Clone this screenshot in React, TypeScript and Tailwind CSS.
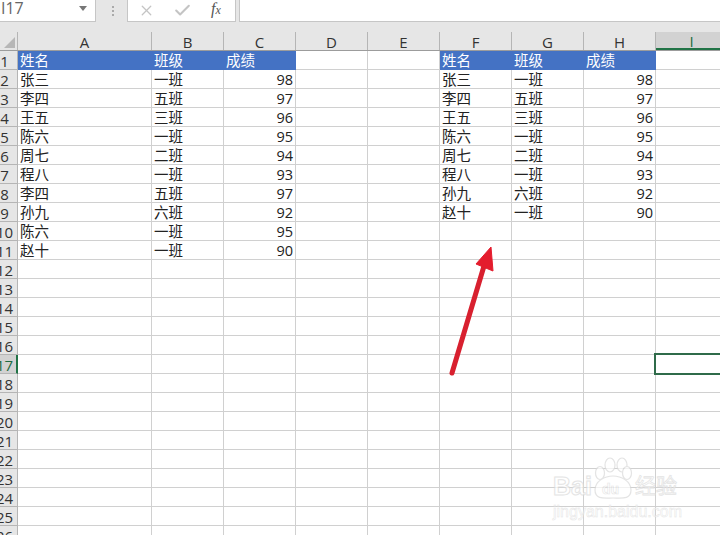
import { X, Check } from "lucide-react";

const font = "font-['Liberation_Sans','Noto_Sans_CJK_SC',sans-serif]";
const thin = "font-['Open_Sans','Liberation_Sans',sans-serif] font-normal";

const columns = [
  { label: "A", width: "w-[134px]" },
  { label: "B", width: "w-[72px]" },
  { label: "C", width: "w-[72px]" },
  { label: "D", width: "w-[72px]" },
  { label: "E", width: "w-[72px]" },
  { label: "F", width: "w-[72px]" },
  { label: "G", width: "w-[72px]" },
  { label: "H", width: "w-[72px]" },
  { label: "I", width: "w-[72px]" },
];

const left = [
  ["张三", "一班", "98"],
  ["李四", "五班", "97"],
  ["王五", "三班", "96"],
  ["陈六", "一班", "95"],
  ["周七", "二班", "94"],
  ["程八", "一班", "93"],
  ["李四", "五班", "97"],
  ["孙九", "六班", "92"],
  ["陈六", "一班", "95"],
  ["赵十", "一班", "90"],
];

const right = [
  ["张三", "一班", "98"],
  ["李四", "五班", "97"],
  ["王五", "三班", "96"],
  ["陈六", "一班", "95"],
  ["周七", "二班", "94"],
  ["程八", "一班", "93"],
  ["孙九", "六班", "92"],
  ["赵十", "一班", "90"],
];

const rows = Array.from({ length: 26 }, (_, i) => i + 1);

function cellText(rowNo: number, colIdx: number) {
  const head = ["姓名", "班级", "成绩"];
  if (colIdx <= 2) {
    if (rowNo === 1) return head[colIdx];
    return left[rowNo - 2]?.[colIdx] ?? "";
  }
  if (colIdx >= 5 && colIdx <= 7) {
    if (rowNo === 1) return head[colIdx - 5];
    return right[rowNo - 2]?.[colIdx - 5] ?? "";
  }
  return "";
}

function Toolbar() {
  return (
    <div className="h-[32px] bg-[#e6e6e6] flex items-start">
      {/* 이름 상자 */}
      <div className="w-[96px] h-[22px] bg-white border-r border-b border-[#c6c6c6] flex items-start justify-between pr-[5px]">
        <span className={`text-[16px] leading-[16px] pl-[1px] text-[#666] ${thin}`}>I17</span>
        <span className="w-0 h-0 border-x-[4px] border-x-transparent border-t-[5px] border-t-[#777] mr-[3px] mt-[6px]" />
      </div>
      <div className="w-[31px] h-[22px] flex flex-col items-center justify-center gap-[2px] pl-[2px]">
        <span className="w-[2px] h-[2px] bg-[#aaa]" />
        <span className="w-[2px] h-[2px] bg-[#aaa]" />
        <span className="w-[2px] h-[2px] bg-[#aaa]" />
      </div>
      {/* 수식 버튼 */}
      <div className="w-[109px] h-[22px] bg-white border-x border-b border-[#c6c6c6] flex items-center pl-[10px] gap-[18px]">
        <X size={17} strokeWidth={1.8} className="text-[#c4c4c4]" />
        <Check size={19} strokeWidth={2.6} className="text-[#c4c4c4]" />
        <span className="font-['Liberation_Serif',serif] italic text-[16px] leading-none text-[#555] ml-[1px] pb-[3px]">
          f<span className="text-[12px]">x</span>
        </span>
      </div>
      <div className="w-[3px]" />
      <div className="flex-1 h-[22px] bg-white border-l border-b border-[#c6c6c6]" />
    </div>
  );
}

function ColumnHeader() {
  return (
    <div className="flex h-[19px] bg-[#e6e6e6] border-b border-[#9c9c9c]">
      <div className="w-[18px] shrink-0 border-r border-[#b5b5b5] flex items-end justify-end pr-[2px] pb-[2px]">
        <span className="w-0 h-0 border-l-[11px] border-l-transparent border-b-[11px] border-b-[#b7b7b7]" />
      </div>
      {columns.map((c) => (
        <div
          key={c.label}
          className={`${c.width} shrink-0 border-r border-[#b5b5b5] flex items-center justify-center text-[15px] leading-none pt-[2px] ${thin} ${
            c.label === "I" ? "bg-[#d2d2d2] border-b-2 border-b-[#217346] text-[#1f6b41]" : "text-[#333]"
          }`}
        >
          {c.label}
        </div>
      ))}
    </div>
  );
}

function Row({ n }: { n: number }) {
  const isActive = n === 17;
  return (
    <div className="flex h-[19px]">
      <div
        className={`w-[18px] shrink-0 border-r border-b flex text-[15px] leading-none ${thin} ${
          isActive
            ? "bg-[#d2d2d2] border-r-2 border-r-[#217346] border-b-[#b5b5b5] text-[#1f6b41]"
            : "bg-[#e6e6e6] border-[#b5b5b5] text-[#333]"
        }`}
      >
        <div className="w-[9px] flex justify-center items-center pt-[2px]">
          <span>{n}</span>
        </div>
      </div>
      {columns.map((c, i) => {
        const text = cellText(n, i);
        const filled = n === 1 && i <= 7 && i !== 3 && i !== 4;
        const numeric = n > 1 && (i === 2 || i === 7);
        return (
          <div
            key={c.label}
            className={`${c.width} shrink-0 border-b border-r flex items-center pt-[2px] leading-none whitespace-nowrap ${
              filled ? "bg-[#4472c4] text-white border-[#4472c4]" : "border-[#d0d0d0] text-[#222]"
            } ${numeric ? `justify-end pr-[2px] text-[14.5px] ${thin}` : "pl-[2px] text-[14.5px]"}`}
          >
            {text}
          </div>
        );
      })}
    </div>
  );
}

export default function App() {
  return (
    <div className={`relative w-[720px] h-[535px] overflow-hidden bg-white ${font}`}>
      <Toolbar />
      <ColumnHeader />
      {rows.map((n) => (
        <Row key={n} n={n} />
      ))}

      {/* 선택 셀 */}
      <div className="absolute left-[654px] top-[353px] w-[80px] h-[22px] border-2 border-[#2f6b4a]" />

      {/* 화살표 */}
      <svg className="absolute left-[440px] top-[240px]" width="60" height="140" viewBox="0 0 60 140">
        <path d="M12 133 L44 26" stroke="#d8202f" strokeWidth="5" strokeLinecap="round" fill="none" />
        <path d="M51 7 L36 24 L53 31 Z" fill="#e41c2d" stroke="#e41c2d" strokeWidth="1" strokeLinejoin="round" />
      </svg>

      {/* 워터마크 */}
      <div className="absolute left-[552px] top-[456px] w-[150px] h-[70px] opacity-70">
        <svg className="absolute left-[38px] top-0" width="50" height="46" viewBox="0 0 50 46" fill="#fff" stroke="#d9d9d9" strokeWidth="1.2">
          <ellipse cx="10" cy="17" rx="4.5" ry="6.5" />
          <ellipse cx="20" cy="9" rx="5" ry="7" />
          <ellipse cx="32" cy="9" rx="5" ry="7" />
          <ellipse cx="37" cy="17" rx="4.5" ry="6.5" />
          <path d="M5 34 C5 25 15 20 23 20 C31 20 41 25 41 34 C41 44 31 42 23 42 C15 42 5 44 5 34 Z" />
        </svg>
        <span className="absolute left-[1px] top-[18px] text-[25px] leading-none font-bold text-white [-webkit-text-stroke:1px_#d9d9d9]">Bai</span>
        <span className="absolute left-[50px] top-[26px] text-[14px] leading-none font-bold text-white [-webkit-text-stroke:0.6px_#d9d9d9]">du</span>
        <span className="absolute left-[83px] top-[19px] text-[21px] leading-none text-white [-webkit-text-stroke:0.8px_#d9d9d9]">经验</span>
        <span className="absolute left-[1px] top-[48px] text-[16px] leading-none text-white [-webkit-text-stroke:0.5px_#d9d9d9] whitespace-nowrap">jingyan.baidu.com</span>
      </div>
    </div>
  );
}
